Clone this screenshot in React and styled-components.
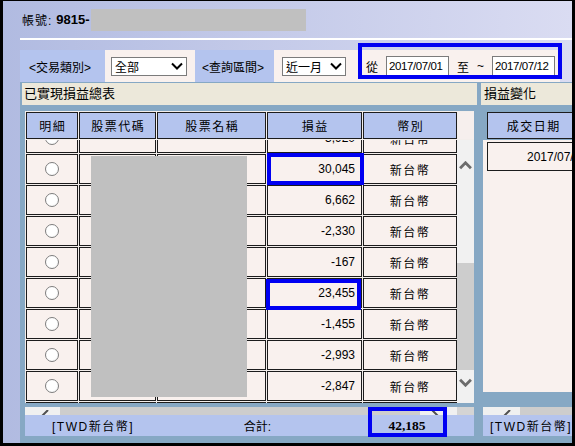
import React, { useLayoutEffect, useRef } from "react";
import styled, { createGlobalStyle } from "styled-components";

const GlobalStyle = createGlobalStyle`
  * { box-sizing: border-box; }
  html, body { margin: 0; padding: 0; background: #000; }
  body {
    font-family: "Liberation Sans", "Noto Sans CJK TC", sans-serif;
    font-size: 12px;
    color: #000;
  }
`;

// palette
const steel = "#86a8c4";
const tan = "#ece8da";
const lightBlue = "#b4c4ee";
const pink = "#f9f1ee";
const gapColor = "#f3eeeb";
const line = "#1c1c1c";
const markBlue = "#0000f2";

const COLS = "52px 77px 109px 95px 94px";

const Frame = styled.div`
  width: 575px;
  height: 446px;
  border-style: solid;
  border-color: #000;
  border-width: 1px 3px 3px 3px;
  background: linear-gradient(to right, #b1bbe1, #dadcf2);
  display: flex;
  flex-direction: column;
  overflow: hidden;
`;

const TopBar = styled.div`
  height: 37px;
  flex-shrink: 0;
  padding-left: 19px;
  display: flex;
  align-items: center;
`;

const AccountLabel = styled.span`
  font-size: 12px;
  letter-spacing: 1px;
  margin-right: 4px;
`;

const AccountNo = styled.span`
  font-weight: bold;
  font-size: 13px;
`;

const Redacted = styled.div`
  width: ${p => p.$w}px;
  height: ${p => p.$h}px;
  background: #c0c0c0;
  margin-left: 1px;
`;

const Divider = styled.div`
  height: 2px;
  flex-shrink: 0;
  margin-left: 17px;
  background: #fff;
`;

// Filter bar
const FilterRow = styled.div`
  height: 32px;
  flex-shrink: 0;
  margin: 10px 0 0 17px;
  display: flex;
`;

const FilterLabel = styled.div`
  width: ${p => p.$w}px;
  padding-left: ${p => p.$pl}px;
  background: ${lightBlue};
  display: flex;
  align-items: center;
  font-size: 12px;
  white-space: nowrap;
`;

const FilterCell = styled.div`
  width: ${p => p.$w}px;
  padding-left: ${p => p.$pl}px;
  background: ${pink};
  display: flex;
  align-items: center;
`;

const DateCell = styled.div`
  position: relative;
  width: 204px;
  padding-left: 10px;
  background: ${pink};
  display: flex;
  align-items: center;
  gap: 8px;
  font-size: 12px;
`;

const SelectBox = styled.div`
  width: ${p => p.$w}px;
  height: 19px;
  border: 1px solid #7b7b7b;
  background: #fff;
  display: flex;
  align-items: center;
  justify-content: space-between;
  padding: 0 3px 0 3px;
  font-size: 12px;
`;

const DateBox = styled.div`
  width: 63px;
  height: 21px;
  border: 1px solid #7b7b7b;
  background: #fff;
  display: flex;
  align-items: center;
  padding-left: 2px;
  font-size: 11.5px;
  letter-spacing: -0.4px;
  overflow: hidden;
  white-space: nowrap;
`;

const Highlight = styled.span`
  position: absolute;
  top: ${p => p.$t}px;
  left: ${p => p.$l}px;
  right: ${p => p.$r}px;
  bottom: ${p => p.$b}px;
  border: 4px solid ${markBlue};
  pointer-events: none;
  z-index: 3;
`;

// Panels
const Main = styled.div`
  flex: 1;
  margin-left: 17px;
  display: flex;
  gap: 3px;
  background: ${steel};
  min-height: 0;
`;

const Panel = styled.div`
  width: ${p => (p.$w ? `${p.$w}px` : "auto")};
  flex: ${p => (p.$w ? "none" : "1")};
  min-width: 0;
  display: flex;
  flex-direction: column;
  padding-top: 1px;
  overflow: hidden;
`;

const PanelTitle = styled.div`
  height: 22px;
  margin: ${p => p.$margin || "0"};
  padding-left: ${p => p.$pl}px;
  background: ${tan};
  font-size: 13px;
  line-height: 22px;
  white-space: nowrap;
`;

const TableFrame = styled.div`
  margin-top: 6px;
  padding: ${p => (p.$flush ? "0" : "0 4px 0 5px")};
  display: flex;
  flex-direction: column;
`;

const HeadRow = styled.div`
  display: grid;
  grid-template-columns: ${COLS} 1fr;
  column-gap: 1px;
  padding: 1px 0 1px 1px;
  background: ${gapColor};
`;

const HeadCell = styled.div`
  width: ${p => (p.$w ? `${p.$w}px` : "auto")};
  flex-shrink: 0;
  height: 27px;
  border: 1px solid ${line};
  background: ${lightBlue};
  display: flex;
  align-items: center;
  justify-content: center;
  font-size: 12px;
  letter-spacing: 1.5px;
  padding-left: 1.5px;
  white-space: nowrap;
`;

const ScrollCap = styled.div`
  background: #f6efed;
`;

const BodyArea = styled.div`
  position: relative;
  height: 263px;
  display: flex;
`;

const BodyScroll = styled.div`
  width: 432px;
  height: 100%;
  overflow: hidden;
  background: ${gapColor};
`;

const BodyGrid = styled.div`
  display: grid;
  grid-template-columns: ${COLS};
  grid-auto-rows: 30px;
  gap: 1px;
  padding: 1px;
`;

const Cell = styled.div`
  position: ${p => (p.$marked ? "relative" : "static")};
  border: 1px solid ${line};
  background: ${pink};
  display: flex;
  align-items: center;
  justify-content: ${p => p.$align || "center"};
  padding-right: ${p => (p.$align === "flex-end" ? "6px" : "0")};
  font-size: 12px;
  letter-spacing: ${p => (p.$cjk ? "1.5px" : "0")};
  white-space: nowrap;
`;

const Radio = styled.span`
  width: 14px;
  height: 14px;
  border-radius: 50%;
  border: 1px solid #7e7e7e;
  background: radial-gradient(circle at 40% 40%, #fff 55%, #ececec);
`;

const Mask = styled.div`
  position: absolute;
  left: 66px;
  top: 16px;
  width: 156px;
  height: 241px;
  background: #c0c0c0;
`;

const VScroll = styled.div`
  flex: 1;
  background: #f1f1f1;
  display: flex;
  flex-direction: column;
`;

const ScrollBtn = styled.div`
  height: ${p => p.$h}px;
  display: flex;
  align-items: center;
  justify-content: center;
`;

const Track = styled.div`
  flex: 1;
`;

const Thumb = styled.div`
  margin-top: ${p => p.$offset}px;
  height: ${p => p.$size}px;
  background: #cdcdcd;
`;

const HScroll = styled.div`
  height: 8px;
  margin-top: ${p => p.$mt}px;
  margin-left: ${p => p.$ml || 0}px;
  display: flex;
  overflow: hidden;
  background: #cdcdcd;
`;

const HBtn = styled.div`
  width: ${p => p.$w}px;
  flex-shrink: 0;
  padding: 3px 0 0 ${p => p.$pl}px;
  background: #f0f0f0;
`;

const HThumb = styled.div`
  flex: 1;
  background: #cdcdcd;
`;

const Corner = styled.div`
  width: 17px;
  background: #d4d4d4;
`;

const Footer = styled.div`
  height: 21px;
  margin-left: ${p => p.$ml || 0}px;
  padding: 0 27px 0 ${p => p.$pl}px;
  background: ${lightBlue};
  display: grid;
  grid-template-columns: ${p => p.$cols || "1fr"};
  align-items: center;
  font-size: 12px;
  white-space: nowrap;
`;

const CurrencyTag = styled.span`
  letter-spacing: 1.5px;
`;

const TotalCell = styled.div`
  position: relative;
  height: 100%;
  display: flex;
  align-items: center;
  justify-content: center;
  font-family: "Liberation Serif", "Noto Sans CJK TC", serif;
  font-weight: bold;
  font-size: 13.5px;
`;

const RightHead = styled.div`
  display: flex;
  padding: 1px 0 1px 6px;
`;

const RightBody = styled.div`
  height: 252px;
  margin-left: 2px;
  padding: 2px 0 0 4px;
  background: ${pink};
`;

const TradeCell = styled.div`
  width: 140px;
  height: 29px;
  border: 1px solid ${line};
  display: flex;
  align-items: center;
  justify-content: center;
  font-size: 12px;
`;

const Chevron = ({ dir = "down", color = "#000", sw = 2, w = 12, h = 8 }) => (
  <svg width={w} height={h} viewBox="0 0 12 8">
    <polyline
      points={dir === "down" ? "1,1.5 6,6.5 11,1.5" : "1,6.5 6,1.5 11,6.5"}
      fill="none"
      stroke={color}
      strokeWidth={sw}
    />
  </svg>
);

const SideArrow = ({ dir }) => (
  <svg width="10" height="10" viewBox="0 0 10 10" style={{ display: "block" }}>
    <polyline
      points={dir === "left" ? "8,0 3,5 8,10" : "2,0 7,5 2,10"}
      fill="none"
      stroke="#505050"
      strokeWidth="2"
    />
  </svg>
);

const rows = [
  { pl: "-3,920" },
  { pl: "30,045", mark: { t: -2, l: -1, r: -3, b: -2 } },
  { pl: "6,662" },
  { pl: "-2,330" },
  { pl: "-167" },
  { pl: "23,455", mark: { t: 0, l: -2, r: 0, b: -3 } },
  { pl: "-1,455" },
  { pl: "-2,993" },
  { pl: "-2,847" },
  { pl: "-4,265" },
];

const headers = ["明細", "股票代碼", "股票名稱", "損益", "幣別"];

const App = () => {
  const bodyRef = useRef(null);

  useLayoutEffect(() => {
    if (bodyRef.current) bodyRef.current.scrollTop = 18;
  }, []);

  return (
    <>
      <GlobalStyle />
      <Frame>
        <TopBar>
          <AccountLabel>帳號:</AccountLabel>
          <AccountNo>9815-</AccountNo>
          <Redacted $w={215} $h={22} />
        </TopBar>
        <Divider />

        <FilterRow>
          <FilterLabel $w={85} $pl={9}>&lt;交易類別&gt;</FilterLabel>
          <FilterCell $w={90} $pl={6}>
            <SelectBox $w={76}>
              <span>全部</span>
              <Chevron />
            </SelectBox>
          </FilterCell>
          <FilterLabel $w={79} $pl={7}>&lt;查詢區間&gt;</FilterLabel>
          <FilterCell $w={82} $pl={8}>
            <SelectBox $w={64}>
              <span>近一月</span>
              <Chevron />
            </SelectBox>
          </FilterCell>
          <DateCell>
            <span>從</span>
            <DateBox>2017/07/01</DateBox>
            <span>至</span>
            <span>~</span>
            <DateBox>2017/07/12</DateBox>
            <Highlight $t={-7} $l={2} $r={-2} $b={3} />
          </DateCell>
        </FilterRow>

        <Main>
          <Panel $w={458}>
            <PanelTitle $margin="0 1px 0 2px" $pl={2}>已實現損益總表</PanelTitle>
            <TableFrame>
              <HeadRow>
                {headers.map(h => (
                  <HeadCell key={h}>{h}</HeadCell>
                ))}
                <ScrollCap />
              </HeadRow>
              <BodyArea>
                <BodyScroll ref={bodyRef}>
                  <BodyGrid>
                    {rows.map((r, i) => (
                      <React.Fragment key={i}>
                        <Cell>
                          <Radio />
                        </Cell>
                        <Cell />
                        <Cell />
                        <Cell $align="flex-end" $marked={!!r.mark}>
                          {r.pl}
                          {r.mark && (
                            <Highlight $t={r.mark.t} $l={r.mark.l} $r={r.mark.r} $b={r.mark.b} />
                          )}
                        </Cell>
                        <Cell $cjk>新台幣</Cell>
                      </React.Fragment>
                    ))}
                  </BodyGrid>
                </BodyScroll>
                <VScroll>
                  <ScrollBtn $h={50}>
                    <Chevron dir="up" color="#6c6c6c" sw={2.6} w={13} h={9} />
                  </ScrollBtn>
                  <Track>
                    <Thumb $offset={73} $size={107} />
                  </Track>
                  <ScrollBtn $h={25}>
                    <Chevron dir="down" color="#6c6c6c" sw={2.6} w={13} h={9} />
                  </ScrollBtn>
                  <ScrollBtn $h={8} />
                </VScroll>
                <Mask />
              </BodyArea>
              <HScroll $mt={4}>
                <HBtn $w={35} $pl={15}>
                  <SideArrow dir="left" />
                </HBtn>
                <HThumb />
                <HBtn $w={37} $pl={10}>
                  <SideArrow dir="right" />
                </HBtn>
                <Corner />
              </HScroll>
              <Footer $pl={27} $cols="1fr auto 96px 80px">
                <CurrencyTag>[TWD新台幣]</CurrencyTag>
                <span>合計:</span>
                <span />
                <TotalCell>
                  42,185
                  <Highlight $t={-8} $l={1} $r={0} $b={-1} />
                </TotalCell>
              </Footer>
            </TableFrame>
          </Panel>

          <Panel>
            <PanelTitle $pl={3}>損益變化</PanelTitle>
            <TableFrame $flush>
              <RightHead>
                <HeadCell $w={92}>成交日期</HeadCell>
              </RightHead>
              <RightBody>
                <TradeCell>2017/07/12</TradeCell>
              </RightBody>
              <HScroll $mt={15} $ml={2}>
                <HBtn $w={37} $pl={19}>
                  <SideArrow dir="left" />
                </HBtn>
                <HThumb />
              </HScroll>
              <Footer $ml={2} $pl={7}>
                <CurrencyTag>[TWD新台幣]</CurrencyTag>
              </Footer>
            </TableFrame>
          </Panel>
        </Main>
      </Frame>
    </>
  );
};

export default App;
